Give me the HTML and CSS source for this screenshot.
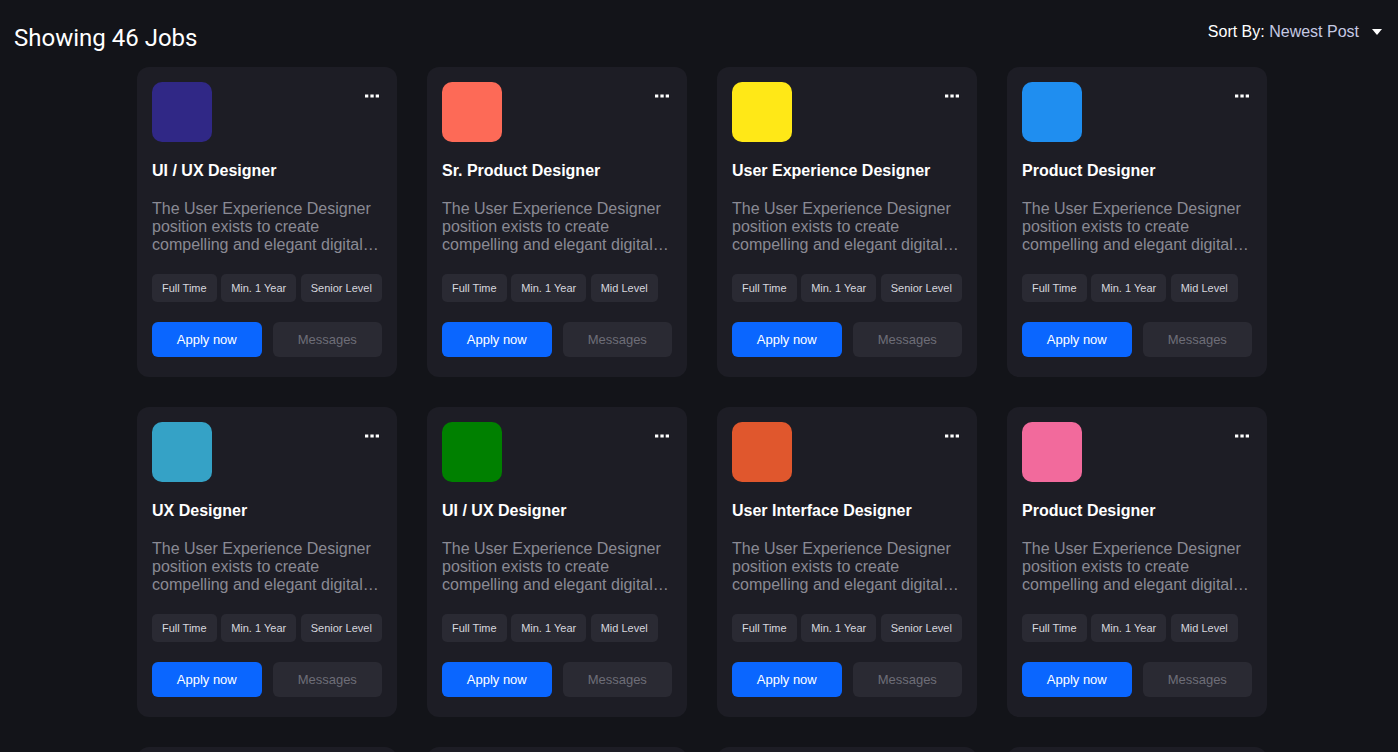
FILE: index.html
```html
<!DOCTYPE html>
<html>
<head>
<meta charset="utf-8">
<link rel="stylesheet" href="styles.css">
</head>
<body>
<header class="top">
  <h1 class="count">Showing 46 Jobs</h1>
  <div class="sort">Sort By: <span class="sort-val">Newest Post</span>
    <svg class="caret" width="10" height="6" viewBox="0 0 10 6"><path d="M0 0h10L5 6z" fill="#fff"/></svg>
  </div>
</header>
<main class="grid">
  <div class="card">
    <div class="card-top"><div class="logo c1"></div><svg class="dots" width="14" height="4" viewBox="0 0 14 4"><rect x="0" y="0.5" width="3.3" height="3" fill="#fff"/><rect x="5.4" y="0.5" width="3.3" height="3" fill="#fff"/><rect x="10.7" y="0.5" width="3.3" height="3" fill="#fff"/></svg></div>
    <h2 class="title">UI / UX Designer</h2>
    <p class="desc">The User Experience Designer position exists to create compelling and elegant digital user experiences through design.</p>
    <div class="tags"><span class="tag">Full Time</span><span class="tag">Min. 1 Year</span><span class="tag">Senior Level</span></div>
    <div class="actions"><button class="btn apply">Apply now</button><button class="btn msg">Messages</button></div>
  </div>
  <div class="card">
    <div class="card-top"><div class="logo c2"></div><svg class="dots" width="14" height="4" viewBox="0 0 14 4"><rect x="0" y="0.5" width="3.3" height="3" fill="#fff"/><rect x="5.4" y="0.5" width="3.3" height="3" fill="#fff"/><rect x="10.7" y="0.5" width="3.3" height="3" fill="#fff"/></svg></div>
    <h2 class="title">Sr. Product Designer</h2>
    <p class="desc">The User Experience Designer position exists to create compelling and elegant digital user experiences through design.</p>
    <div class="tags"><span class="tag">Full Time</span><span class="tag">Min. 1 Year</span><span class="tag">Mid Level</span></div>
    <div class="actions"><button class="btn apply">Apply now</button><button class="btn msg">Messages</button></div>
  </div>
  <div class="card">
    <div class="card-top"><div class="logo c3"></div><svg class="dots" width="14" height="4" viewBox="0 0 14 4"><rect x="0" y="0.5" width="3.3" height="3" fill="#fff"/><rect x="5.4" y="0.5" width="3.3" height="3" fill="#fff"/><rect x="10.7" y="0.5" width="3.3" height="3" fill="#fff"/></svg></div>
    <h2 class="title">User Experience Designer</h2>
    <p class="desc">The User Experience Designer position exists to create compelling and elegant digital user experiences through design.</p>
    <div class="tags"><span class="tag">Full Time</span><span class="tag">Min. 1 Year</span><span class="tag">Senior Level</span></div>
    <div class="actions"><button class="btn apply">Apply now</button><button class="btn msg">Messages</button></div>
  </div>
  <div class="card">
    <div class="card-top"><div class="logo c4"></div><svg class="dots" width="14" height="4" viewBox="0 0 14 4"><rect x="0" y="0.5" width="3.3" height="3" fill="#fff"/><rect x="5.4" y="0.5" width="3.3" height="3" fill="#fff"/><rect x="10.7" y="0.5" width="3.3" height="3" fill="#fff"/></svg></div>
    <h2 class="title">Product Designer</h2>
    <p class="desc">The User Experience Designer position exists to create compelling and elegant digital user experiences through design.</p>
    <div class="tags"><span class="tag">Full Time</span><span class="tag">Min. 1 Year</span><span class="tag">Mid Level</span></div>
    <div class="actions"><button class="btn apply">Apply now</button><button class="btn msg">Messages</button></div>
  </div>
  <div class="card">
    <div class="card-top"><div class="logo c5"></div><svg class="dots" width="14" height="4" viewBox="0 0 14 4"><rect x="0" y="0.5" width="3.3" height="3" fill="#fff"/><rect x="5.4" y="0.5" width="3.3" height="3" fill="#fff"/><rect x="10.7" y="0.5" width="3.3" height="3" fill="#fff"/></svg></div>
    <h2 class="title">UX Designer</h2>
    <p class="desc">The User Experience Designer position exists to create compelling and elegant digital user experiences through design.</p>
    <div class="tags"><span class="tag">Full Time</span><span class="tag">Min. 1 Year</span><span class="tag">Senior Level</span></div>
    <div class="actions"><button class="btn apply">Apply now</button><button class="btn msg">Messages</button></div>
  </div>
  <div class="card">
    <div class="card-top"><div class="logo c6"></div><svg class="dots" width="14" height="4" viewBox="0 0 14 4"><rect x="0" y="0.5" width="3.3" height="3" fill="#fff"/><rect x="5.4" y="0.5" width="3.3" height="3" fill="#fff"/><rect x="10.7" y="0.5" width="3.3" height="3" fill="#fff"/></svg></div>
    <h2 class="title">UI / UX Designer</h2>
    <p class="desc">The User Experience Designer position exists to create compelling and elegant digital user experiences through design.</p>
    <div class="tags"><span class="tag">Full Time</span><span class="tag">Min. 1 Year</span><span class="tag">Mid Level</span></div>
    <div class="actions"><button class="btn apply">Apply now</button><button class="btn msg">Messages</button></div>
  </div>
  <div class="card">
    <div class="card-top"><div class="logo c7"></div><svg class="dots" width="14" height="4" viewBox="0 0 14 4"><rect x="0" y="0.5" width="3.3" height="3" fill="#fff"/><rect x="5.4" y="0.5" width="3.3" height="3" fill="#fff"/><rect x="10.7" y="0.5" width="3.3" height="3" fill="#fff"/></svg></div>
    <h2 class="title">User Interface Designer</h2>
    <p class="desc">The User Experience Designer position exists to create compelling and elegant digital user experiences through design.</p>
    <div class="tags"><span class="tag">Full Time</span><span class="tag">Min. 1 Year</span><span class="tag">Senior Level</span></div>
    <div class="actions"><button class="btn apply">Apply now</button><button class="btn msg">Messages</button></div>
  </div>
  <div class="card">
    <div class="card-top"><div class="logo c8"></div><svg class="dots" width="14" height="4" viewBox="0 0 14 4"><rect x="0" y="0.5" width="3.3" height="3" fill="#fff"/><rect x="5.4" y="0.5" width="3.3" height="3" fill="#fff"/><rect x="10.7" y="0.5" width="3.3" height="3" fill="#fff"/></svg></div>
    <h2 class="title">Product Designer</h2>
    <p class="desc">The User Experience Designer position exists to create compelling and elegant digital user experiences through design.</p>
    <div class="tags"><span class="tag">Full Time</span><span class="tag">Min. 1 Year</span><span class="tag">Mid Level</span></div>
    <div class="actions"><button class="btn apply">Apply now</button><button class="btn msg">Messages</button></div>
  </div>
  <div class="card">
    <div class="card-top"><div class="logo c1"></div><svg class="dots" width="14" height="4" viewBox="0 0 14 4"><rect x="0" y="0.5" width="3.3" height="3" fill="#fff"/><rect x="5.4" y="0.5" width="3.3" height="3" fill="#fff"/><rect x="10.7" y="0.5" width="3.3" height="3" fill="#fff"/></svg></div>
    <h2 class="title">UI / UX Designer</h2>
    <p class="desc">The User Experience Designer position exists to create compelling and elegant digital user experiences through design.</p>
    <div class="tags"><span class="tag">Full Time</span><span class="tag">Min. 1 Year</span><span class="tag">Senior Level</span></div>
    <div class="actions"><button class="btn apply">Apply now</button><button class="btn msg">Messages</button></div>
  </div>
  <div class="card">
    <div class="card-top"><div class="logo c2"></div><svg class="dots" width="14" height="4" viewBox="0 0 14 4"><rect x="0" y="0.5" width="3.3" height="3" fill="#fff"/><rect x="5.4" y="0.5" width="3.3" height="3" fill="#fff"/><rect x="10.7" y="0.5" width="3.3" height="3" fill="#fff"/></svg></div>
    <h2 class="title">Sr. Product Designer</h2>
    <p class="desc">The User Experience Designer position exists to create compelling and elegant digital user experiences through design.</p>
    <div class="tags"><span class="tag">Full Time</span><span class="tag">Min. 1 Year</span><span class="tag">Mid Level</span></div>
    <div class="actions"><button class="btn apply">Apply now</button><button class="btn msg">Messages</button></div>
  </div>
  <div class="card">
    <div class="card-top"><div class="logo c3"></div><svg class="dots" width="14" height="4" viewBox="0 0 14 4"><rect x="0" y="0.5" width="3.3" height="3" fill="#fff"/><rect x="5.4" y="0.5" width="3.3" height="3" fill="#fff"/><rect x="10.7" y="0.5" width="3.3" height="3" fill="#fff"/></svg></div>
    <h2 class="title">User Experience Designer</h2>
    <p class="desc">The User Experience Designer position exists to create compelling and elegant digital user experiences through design.</p>
    <div class="tags"><span class="tag">Full Time</span><span class="tag">Min. 1 Year</span><span class="tag">Senior Level</span></div>
    <div class="actions"><button class="btn apply">Apply now</button><button class="btn msg">Messages</button></div>
  </div>
  <div class="card">
    <div class="card-top"><div class="logo c4"></div><svg class="dots" width="14" height="4" viewBox="0 0 14 4"><rect x="0" y="0.5" width="3.3" height="3" fill="#fff"/><rect x="5.4" y="0.5" width="3.3" height="3" fill="#fff"/><rect x="10.7" y="0.5" width="3.3" height="3" fill="#fff"/></svg></div>
    <h2 class="title">Product Designer</h2>
    <p class="desc">The User Experience Designer position exists to create compelling and elegant digital user experiences through design.</p>
    <div class="tags"><span class="tag">Full Time</span><span class="tag">Min. 1 Year</span><span class="tag">Mid Level</span></div>
    <div class="actions"><button class="btn apply">Apply now</button><button class="btn msg">Messages</button></div>
  </div>
</main>
</body>
</html>
```

FILE: styles.css
```css
html, body {
  margin: 0;
  padding: 0;
  background: #131419;
  font-family: "Liberation Sans", Arial, sans-serif;
  color: #fff;
}

.top {
  display: flex;
  justify-content: space-between;
  align-items: flex-start;
  padding: 22px 16px 0 14px;
  height: 45px;
}

.count {
  margin: 0;
  font-family: Roboto, "Liberation Sans", sans-serif;
  font-weight: 400;
  font-size: 24px;
  line-height: 32px;
  color: #fff;
}

.sort {
  display: flex;
  align-items: center;
  font-size: 16px;
  line-height: 18px;
  color: #fff;
  margin-top: 1px;
  white-space: pre;
}

.sort-val {
  color: #c5c9e3;
}

.caret {
  margin-left: 13px;
}

.grid {
  display: grid;
  grid-template-columns: repeat(4, 260px);
  column-gap: 30px;
  row-gap: 30px;
  padding-left: 137px;
}

.card {
  background: #1d1d25;
  border-radius: 12px;
  padding: 15px 15px 20px;
  height: 310px;
  box-sizing: border-box;
  display: flex;
  flex-direction: column;
}

.card-top {
  display: flex;
  justify-content: space-between;
  align-items: flex-start;
}

.dots {
  margin-top: 12px;
  margin-right: 3px;
}

.logo {
  width: 60px;
  height: 60px;
  border-radius: 10px;
}
.c1 { background: #302886; }
.c2 { background: #fd6a57; }
.c3 { background: #ffe817; }
.c4 { background: #1f8ef0; }
.c5 { background: #35a2c6; }
.c6 { background: #008000; }
.c7 { background: #e0572d; }
.c8 { background: #f26a9c; }

.title {
  margin: 20px 0 0;
  font-size: 16px;
  line-height: 18px;
  font-weight: 700;
  color: #fff;
}

.desc {
  margin: 20px 0 0;
  font-size: 16px;
  line-height: 18px;
  color: #8a8a94;
  display: -webkit-box;
  -webkit-line-clamp: 3;
  -webkit-box-orient: vertical;
  overflow: hidden;
  height: 54px;
}

.tags {
  display: flex;
  gap: 4.5px;
  margin-top: 20px;
}

.tag {
  background: #2a2a33;
  color: #d6d6de;
  font-size: 11px;
  height: 28px;
  line-height: 28px;
  padding: 0 10px;
  border-radius: 5px;
}

.actions {
  display: flex;
  gap: 11px;
  margin-top: 20px;
}

.btn {
  flex: 1;
  height: 35px;
  border: none;
  border-radius: 6px;
  font-family: "Liberation Sans", Arial, sans-serif;
  font-size: 13px;
  padding: 0;
}

.apply {
  background: #0a66ff;
  color: #fff;
}

.msg {
  background: #2a2a33;
  color: #6e6e78;
}
```
